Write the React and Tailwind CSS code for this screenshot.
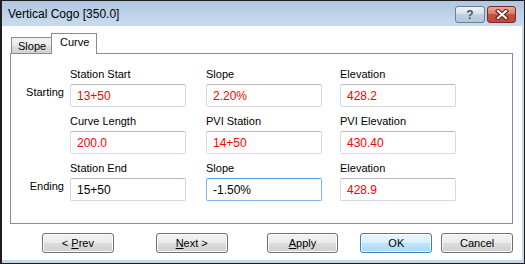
const rows = [
  {
    side: 'Starting',
    fields: [
      { label: 'Station Start', value: '13+50', red: true },
      { label: 'Slope', value: '2.20%', red: true },
      { label: 'Elevation', value: '428.2', red: true },
    ],
  },
  {
    side: '',
    fields: [
      { label: 'Curve Length', value: '200.0', red: true },
      { label: 'PVI Station', value: '14+50', red: true },
      { label: 'PVI Elevation', value: '430.40', red: true },
    ],
  },
  {
    side: 'Ending',
    fields: [
      { label: 'Station End', value: '15+50' },
      { label: 'Slope', value: '-1.50%', focused: true },
      { label: 'Elevation', value: '428.9', red: true },
    ],
  },
];

const btnBase =
  'h-[20px] w-[72px] rounded-[3px] border text-[11px] leading-[18px] text-black shadow-[inset_0_0_0_1px_#fbfbfb]';
const btnGray =
  'border-[#707070] bg-[linear-gradient(#f2f2f2,#ebebeb_50%,#dddddd_50%,#cfcfcf)]';
const btnDefault =
  'border-[#3c7fb1] bg-[linear-gradient(#eaf6fd,#d9f0fc_50%,#bee6fd_50%,#a7d9f5)]';

function Field({ label, value, red, focused }) {
  return (
    <div>
      <div className="h-[16px] text-[11px] leading-[13px] text-black">{label}</div>
      <input
        readOnly
        value={value}
        className={`block h-[23px] w-[116px] rounded-[2px] border px-[6px] text-[12px] outline-none ${
          red ? 'text-[#ff0000]' : 'text-black'
        } ${
          focused
            ? 'border-[#7eb4ea] border-t-[#569de5]'
            : 'border-[#d5d8de] border-t-[#b5b8bf]'
        }`}
      />
    </div>
  );
}

export default function App() {
  return (
    <div
      className="flex h-[264px] w-[525px] flex-col border border-l-2 border-[#1e1e1e] bg-[#c6d8ee]"
      style={{ fontFamily: '"Liberation Sans", Arial, sans-serif' }}
    >
      {/* title bar */}
      <div className="flex h-[25px] bg-[linear-gradient(#b1c7e0,#c9dbef)] pl-[6px] pr-[8px]">
        <div className="flex-1 pt-[6px] text-[12px] leading-[15px] text-black">Vertical Cogo [350.0]</div>
        <div className="mt-[5px] flex gap-[2px]">
          <div className="flex h-[17px] w-[30px] items-center justify-center rounded-[3px] border border-[#6d7f97] bg-[linear-gradient(#eef3f8,#d5e0ec_50%,#c2d1e2_50%,#b4c6da)] text-[12px] font-bold leading-none text-[#4a5566]">
            ?
          </div>
          <div className="flex h-[17px] w-[29px] items-center justify-center rounded-[3px] border border-[#7a2a22] bg-[linear-gradient(#e8a899,#d67763_50%,#c8503f_50%,#c4463a)]">
            <svg width="14" height="11" viewBox="0 0 14 11">
              <path d="M3 2 L11 9 M11 2 L3 9" stroke="#5a1a12" strokeWidth="4.2" strokeLinecap="square" />
              <path d="M3 2 L11 9 M11 2 L3 9" stroke="#ffffff" strokeWidth="2.2" strokeLinecap="square" />
            </svg>
          </div>
        </div>
      </div>

      {/* client */}
      <div className="mb-[3px] mr-[2px] flex flex-1 flex-col bg-white pl-[8px] pr-[9px] pt-[7px]">
        {/* tabs */}
        <div className="flex h-[20px] items-end pl-[1px]">
          <div className="h-[16px] w-[41px] border border-b-0 border-[#898c95] bg-[linear-gradient(#f3f3f3,#ebebeb_50%,#dddddd_50%,#d3d3d3)] pl-[6px] pt-[2px] text-[11px] leading-[13px] text-black">
            Slope
          </div>
          <div className="relative z-10 -mb-[1px] -ml-[1px] h-[21px] w-[46px] border border-b-0 border-[#898c95] bg-white pl-[8px] pt-[2px] text-[11px] leading-[13px] text-black">
            Curve
          </div>
        </div>

        {/* panel */}
        <div className="flex h-[171px] flex-col gap-[8px] border border-[#898c95] pt-[14px]">
          {rows.map((row, i) => (
            <div key={i} className="flex">
              <div className="w-[53px] pt-[18px] text-right text-[11px] leading-[13px] text-black">{row.side}</div>
              <div className="ml-[6px] grid grid-cols-[136px_134px_116px]">
                {row.fields.map((f) => (
                  <Field key={f.label + i} {...f} />
                ))}
              </div>
            </div>
          ))}
        </div>

        {/* buttons */}
        <div className="mt-[9px] flex pl-[32px]">
          <button className={`${btnBase} ${btnGray}`}>
            &lt; <span className="underline">P</span>rev
          </button>
          <button className={`${btnBase} ${btnGray} ml-[42px]`}>
            <span className="underline">N</span>ext &gt;
          </button>
          <button className={`${btnBase} ${btnGray} ml-[39px]`}>
            <span className="underline">A</span>pply
          </button>
          <button className={`${btnBase} ${btnDefault} ml-[22px]`}>OK</button>
          <button className={`${btnBase} ${btnGray} ml-[9px] w-[70px]`}>Cancel</button>
        </div>
      </div>
    </div>
  );
}
